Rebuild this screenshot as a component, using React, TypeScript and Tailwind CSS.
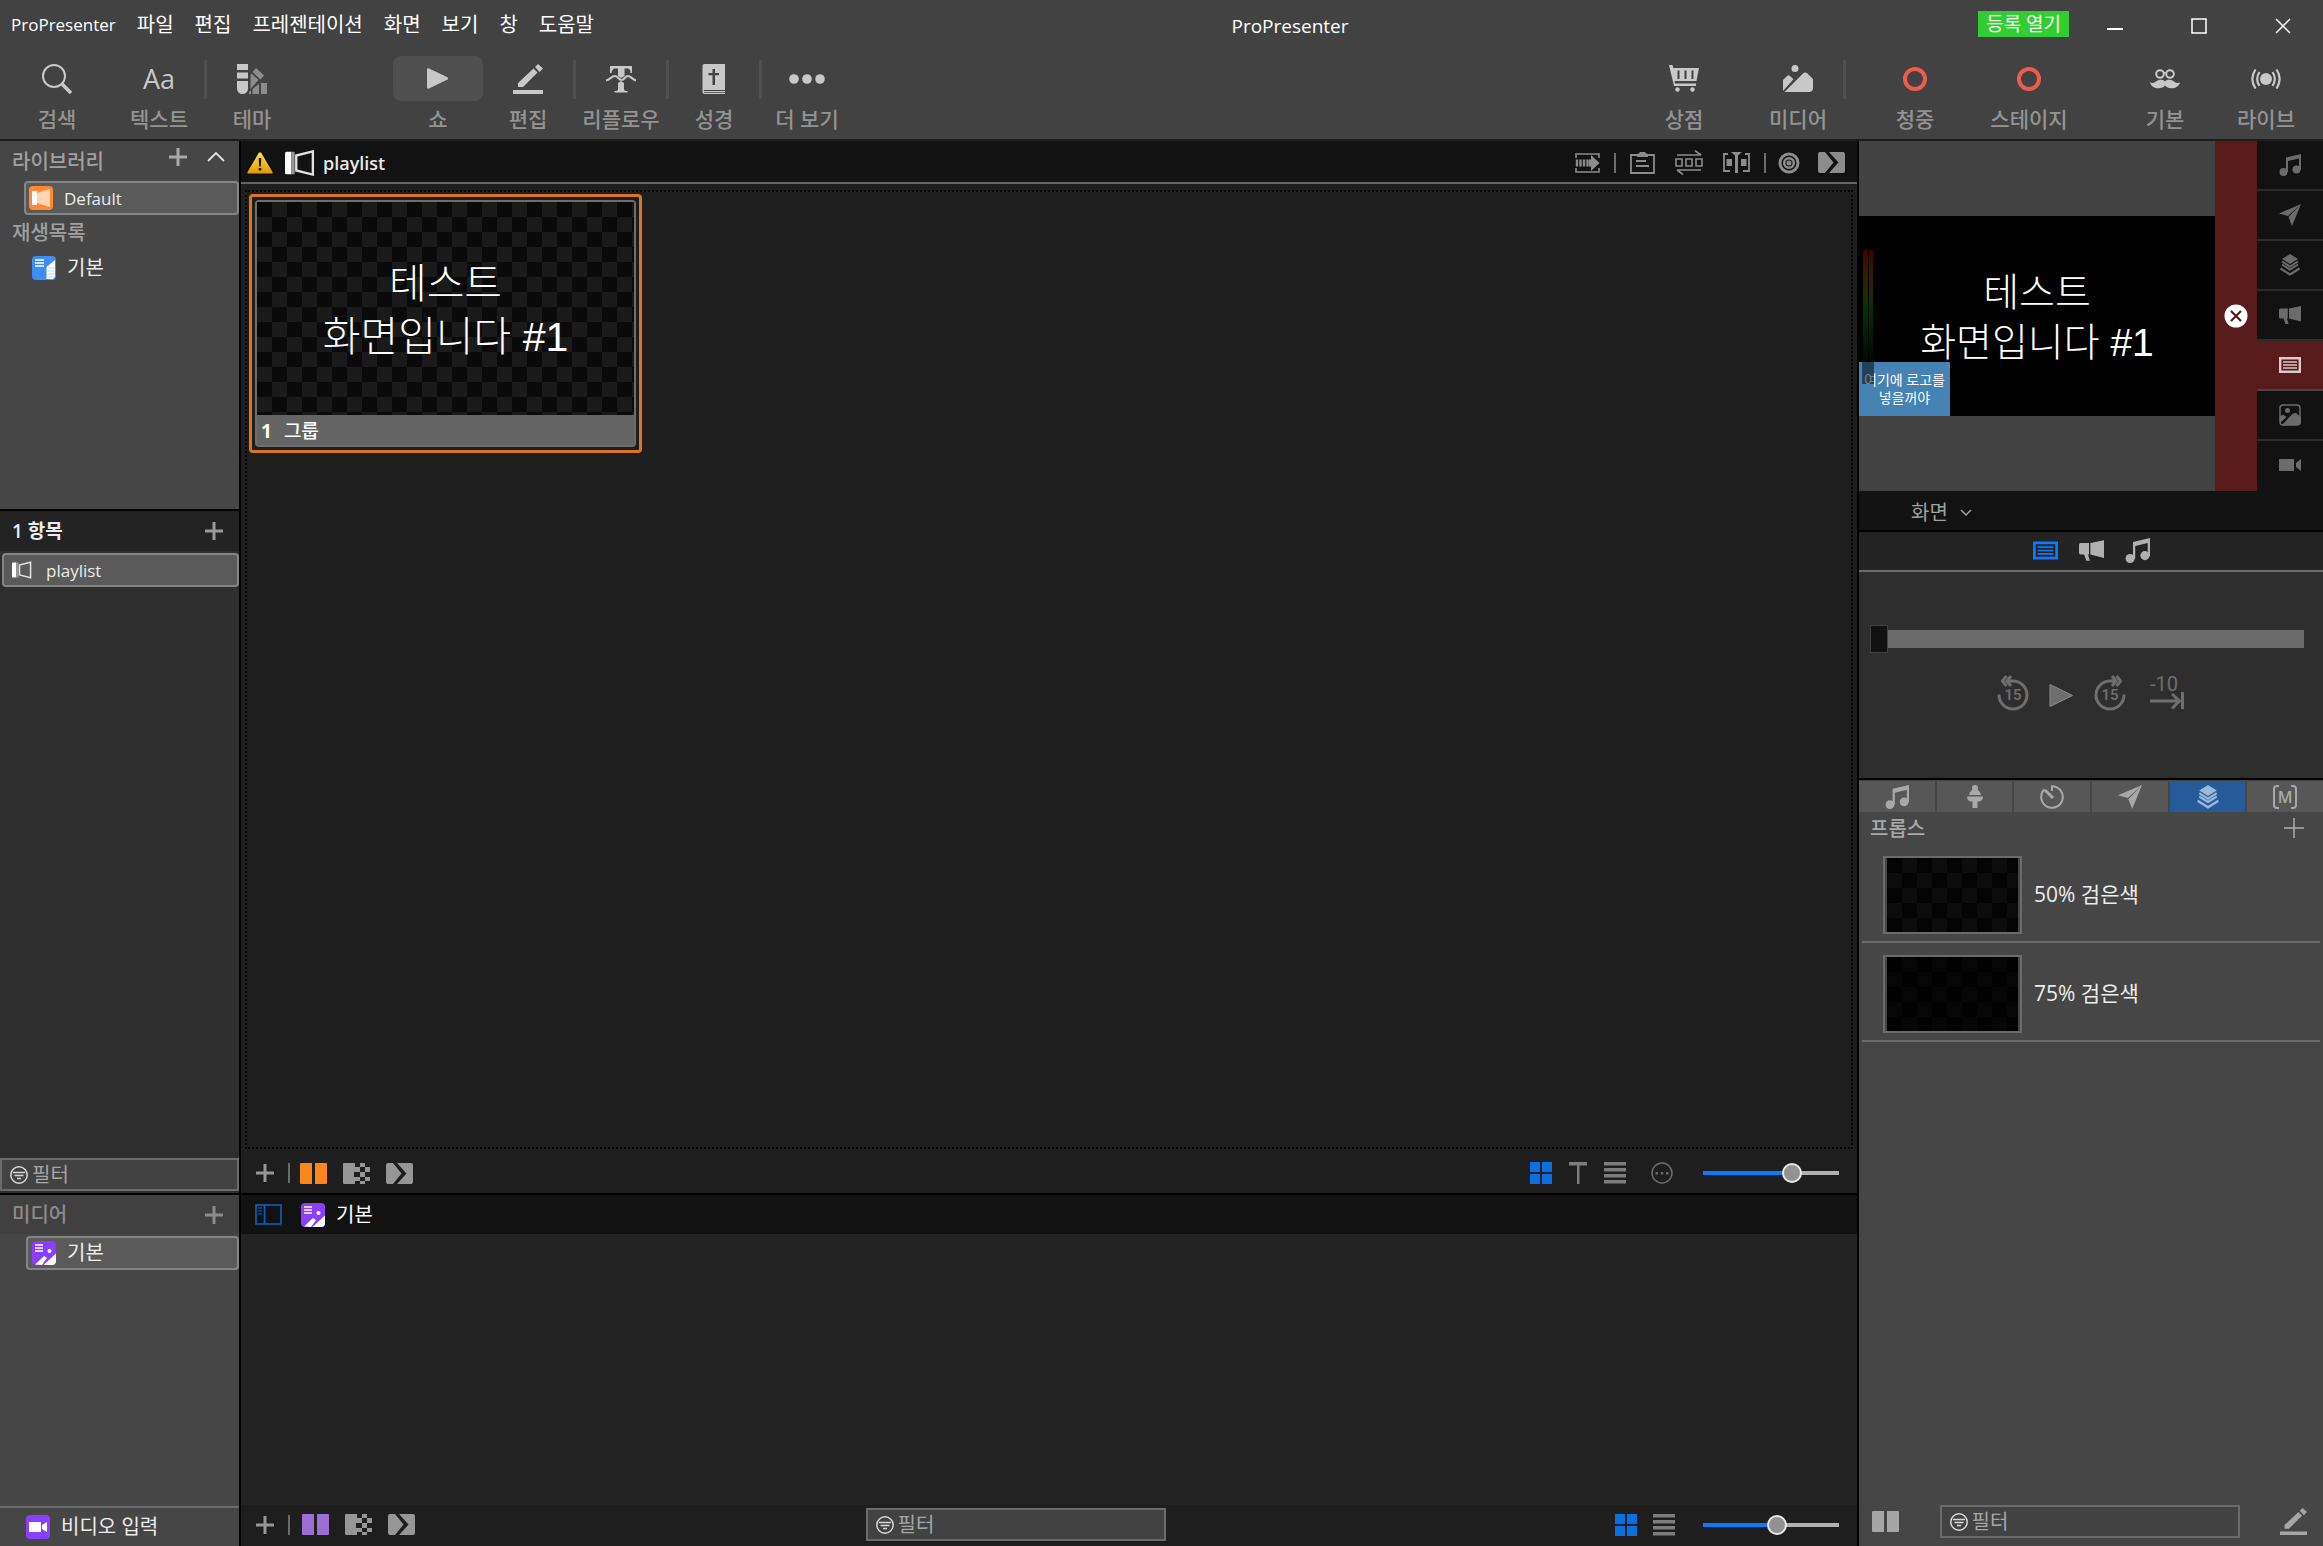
import { useState, type ReactNode } from "react";
import clsx from "clsx";

type IconProps = { className?: string };

const SearchIcon = () => (
  <svg width="30" height="30" viewBox="0 0 30 30" fill="none" stroke="currentColor">
    <circle cx="12" cy="12" r="11" strokeWidth="2" />
    <path d="M20 20l9 9" strokeWidth="3.500" />
  </svg>
);

const ThemeIcon = () => (
  <svg width="30" height="30" viewBox="0 0 30 30">
    <g fill="#c8c8c8">
      <path d="M0 0h11v6H0zM0 8.500h11v6H0zM0 17h11v7.500a5.500 5.500 0 0 1-11 0z" />
    </g>
    <g fill="#8c8c8c">
      <path d="M19 4l8 7.500-3.500 4L15.500 8zM14.500 9.500l7 6.500-8 9V11z" />
      <path d="M24 19h6v11h-6zM15.500 25l6.500-5v10h-6.500zM12 28l2-1.500V30h-2z" />
    </g>
  </svg>
);

const PlayIcon = () => (
  <svg width="22" height="21" viewBox="0 0 22 21" fill="currentColor">
    <path d="M0 1.500C0 .3 1 0 2 .4l18 8.600c1.500.8 1.500 2 0 2.800L2 20.600c-1 .4-2 0-2-1.200z" />
  </svg>
);

const EditIcon = () => (
  <svg width="30" height="30" viewBox="0 0 30 30" fill="currentColor">
    <path d="M0 26h30v4H0zM5 23v-4L20.500 4.500l4 4L10 23zM22 3l3-3 5 4.500-3.500 3.500z" />
  </svg>
);

const ReflowIcon = () => (
  <svg width="30" height="28" viewBox="0 0 30 28" fill="currentColor">
    <path d="M4 1h22v7h-1.500c0-3-1-4.500-3-4.500h-3V11L15 13l-3-2V3.500H9c-2 0-3 1.500-3.500 4.500H4zM12 18l3-2 3 2v6.500c0 1.500 1.500 1.500 3.500 1.500v1.500h-13V26c2 0 3.500 0 3.500-1.500z" />
    <path d="M0 15.500c4-1 5.500-4.500 9-4.500s3.500 4 6.500 4 3.500-4 6.500-4 4 3.500 8 4.500" fill="none" stroke="currentColor" strokeWidth="2.200" />
  </svg>
);

const BibleIcon = () => (
  <svg width="24" height="30" viewBox="0 0 24 30">
    <path d="M2 0h21v30H2a2 2 0 0 1-1.500-2V2A2 2 0 0 1 2 0z" fill="#c8c8c8" />
    <path d="M10.500 5h2.500v4h4v2.300h-4V21h-2.500v-9.700h-4V9h4zM2 26h21v1H2zM2 28h21v.8H2z" fill="#424242" />
  </svg>
);

const MoreIcon = () => (
  <svg width="36" height="10" viewBox="0 0 36 10" fill="currentColor">
    <circle cx="5" cy="5" r="4.800" />
    <circle cx="18" cy="5" r="4.800" />
    <circle cx="31" cy="5" r="4.800" />
  </svg>
);

const CartIcon = () => (
  <svg width="30" height="27" viewBox="0 0 30 27" fill="currentColor">
    <path fillRule="evenodd" d="M0 0h3.500l.8 3H30l-2.500 13H5.500L6 18.500h21v2.500H5zM8.500 5.500v8.500h2V5.500zm7 0v8.500h2V5.500zm7 0v8.500h2V5.500z" />
    <circle cx="8.500" cy="24.500" r="2.200" />
    <circle cx="23.500" cy="24.500" r="2.200" />
  </svg>
);

const MediaIcon = () => (
  <svg width="30" height="27" viewBox="0 0 30 27" fill="currentColor">
    <circle cx="12" cy="3.500" r="3.500" />
    <path d="M0 23V15l4-4c1-.9 2-.9 3 0l3.500 3.200L0 26zM1.500 27L20 8.500c1.500-1.500 3-1.500 4.500 0L30 14v9a4 4 0 0 1-4 4z" />
  </svg>
);

const RingIcon = () => (
  <svg width="24" height="24" viewBox="0 0 24 24" fill="none" stroke="#ee5d4b">
    <circle cx="12" cy="12" r="10" strokeWidth="4" />
  </svg>
);

const MustacheIcon = () => (
  <svg width="30" height="20" viewBox="0 0 30 20" fill="none" stroke="currentColor">
    <circle cx="10" cy="5" r="3.800" strokeWidth="2" />
    <circle cx="20" cy="5" r="3.800" strokeWidth="2" />
    <path d="M13.500 4q1.500-1 3 0" strokeWidth="1.600" />
    <path d="M15 12.500c1.500-2.500 6.500-2.500 9 0 1.500 1.500 4 2 6 .8-1 4-4.500 6-8.500 6-3 0-5-1-6.500-2.700-1.500 1.700-3.500 2.700-6.500 2.700-4 0-7.500-2-8.500-6 2 1.200 4.500.7 6-.8 2.500-2.500 7.500-2.500 9 0z" fill="currentColor" stroke="none" />
  </svg>
);

const LiveIcon = () => (
  <svg width="30" height="20" viewBox="0 0 30 20" fill="none" stroke="currentColor" strokeWidth="2.200">
    <circle cx="15" cy="10" r="6" fill="currentColor" stroke="none" />
    <path d="M4.500.5c-4 6-4 13 0 19M8.500 3c-3 4.500-3 9.500 0 14M25.500.5c4 6 4 13 0 19M21.500 3c3 4.500 3 9.500 0 14" />
  </svg>
);

const MusicIcon = ({ className = "size-[22px]" }: IconProps) => (
  <svg className={className} viewBox="0 0 22 22" fill="currentColor">
    <path d="M7 3.500L22 0v4L9 7v11H7z" />
    <path d="M20 2h2v14h-2z" />
    <circle cx="4.500" cy="18" r="4" />
    <circle cx="17.500" cy="15.500" r="4" />
  </svg>
);

const SendIcon = ({ className = "size-[22px]" }: IconProps) => (
  <svg className={className} viewBox="0 0 22 22" fill="currentColor">
    <path d="M22 0L0 9.500l9 2.500zM22 0L9.500 13l3.500 9z" />
  </svg>
);

const LayersIcon = ({ className = "size-[22px]" }: IconProps) => (
  <svg className={className} viewBox="0 0 22 22" fill="currentColor">
    <path d="M11 0l8 5-8 5-8-5z" />
    <path d="M3 7.500l8 5 8-5M3 10.500l8 5 8-5" fill="none" stroke="currentColor" strokeWidth="2" />
    <path d="M1.500 14.500L11 20.500l9.500-6" fill="none" stroke="currentColor" strokeWidth="2.200" />
  </svg>
);

const HornIcon = ({ className = "size-[22px]" }: IconProps) => (
  <svg className={className} viewBox="0 0 22 22" fill="currentColor">
    <path d="M10 4.500L22 2v15.500L10 14.500zM0 6q0-1.500 1.500-1.500H8.800v10H8l1.500 5.500H6.500L4.500 14.500h-3Q0 14.500 0 13z" />
  </svg>
);

const SlideIcon = ({ className = "size-[22px]" }: IconProps) => (
  <svg className={className} viewBox="0 0 22 22" fill="none" stroke="currentColor">
    <path d="M1.200 4.200h19.600v13.600H1.200z" strokeWidth="2.400" />
    <path d="M4 8h14M4 11h14M4 14h14" strokeWidth="1.500" />
  </svg>
);

const PictureIcon = ({ className = "size-[22px]" }: IconProps) => (
  <svg className={className} viewBox="0 0 22 22" fill="currentColor">
    <rect x="1" y="1" width="20" height="20" rx="3" fill="none" stroke="currentColor" strokeWidth="1.500" />
    <circle cx="8.500" cy="6.500" r="2.500" />
    <path d="M1 12.500l3-2 3.500 2.500L1 19zM3 21L14 9.500l3-.5 5 4.500V18a3 3 0 0 1-3 3z" />
  </svg>
);

const CameraIcon = ({ className = "size-[22px]" }: IconProps) => (
  <svg className={className} viewBox="0 0 22 22" fill="currentColor">
    <path d="M0 5h15v12H0zM17 9l5-4v12l-5-4z" />
  </svg>
);

const StageIcon = () => (
  <svg width="16" height="23" viewBox="0 0 16 23" fill="currentColor">
    <circle cx="8" cy="3" r="3" />
    <path d="M5 5h6q3 2 3 5H2q0-3 3-5zM1 11.500h14q1 0 1 1-1 4-4 4H4q-3 0-4-4 0-1 1-1zM5.500 16h5v7h-5z" />
  </svg>
);

const TimerIcon = () => (
  <svg width="24" height="24" viewBox="0 0 24 24" fill="none" stroke="currentColor" strokeWidth="2">
    <path d="M12 6V1.200A10.800 10.800 0 1 1 4.500 4.200" />
    <path d="M5 5l8 8" strokeWidth="3" />
  </svg>
);

const MacroIcon = () => (
  <span className="flex items-center">
    <svg width="6" height="24" viewBox="0 0 6 24" fill="none" stroke="currentColor" strokeWidth="2">
      <path d="M6 1H4Q1 1 1 4v16q0 3 3 3h2" />
    </svg>
    <span className="flex w-3 justify-center text-[16px] leading-6 font-semibold">M</span>
    <svg width="6" height="24" viewBox="0 0 6 24" fill="none" stroke="currentColor" strokeWidth="2">
      <path d="M0 1h2q3 0 3 3v16q0 3-3 3H0" />
    </svg>
  </span>
);

const PlusIcon = ({ className = "size-[18px]" }: IconProps) => (
  <svg className={className} viewBox="0 0 18 18" stroke="currentColor" strokeWidth="3">
    <path d="M9 0v18M0 9h18" />
  </svg>
);

const DocumentIcon = ({ className = "h-6 w-7" }: IconProps) => (
  <svg className={className} viewBox="0 0 28 24">
    <path d="M0 3q0-1.500 1.500-1.500H6v21H1.500Q0 22.500 0 21z" fill="#fff" />
    <path d="M6 1.500h3v21H6z" fill="#999" />
    <path d="M10.500 5L26 1.200v21.600L10.500 19z" fill="none" stroke="#e0e0e0" strokeWidth="2.200" />
  </svg>
);

const LibraryIcon = () => (
  <svg width="24" height="24" viewBox="0 0 24 24">
    <rect width="24" height="24" rx="4" fill="#ff8a35" />
    <path d="M3 5h5v14H3z" fill="#fff" />
    <path d="M8 7l13-4v18L8 17z" fill="#ffd6b5" />
  </svg>
);

const PlaylistIcon = () => (
  <svg width="24" height="24" viewBox="0 0 24 24">
    <rect width="24" height="24" rx="4" fill="#3d8ff5" />
    <path d="M3 4h9M3 7h9M3 10h9" stroke="#fff" strokeWidth="1.500" />
    <path d="M14.500 11L23 4v16q-1 4-5 3h-3.500z" fill="#fff" />
    <path d="M16 12h7M16 15h7M16 18h7M16 21h6" stroke="#bcd6f8" />
  </svg>
);

const MediaPlaylistIcon = () => (
  <svg width="24" height="24" viewBox="0 0 24 24">
    <rect width="24" height="24" rx="4" fill="#8a3ffc" />
    <path d="M3 4h8M3 7h8M3 10h8" stroke="#fff" strokeWidth="1.500" />
    <circle cx="17.500" cy="10" r="2" fill="#fff" />
    <path d="M3 23.500l9-8.500 3 2-5 7zM11.500 24L24 12.500V20q0 4-4 4z" fill="#fff" />
  </svg>
);

const VideoInputIcon = () => (
  <svg width="24" height="24" viewBox="0 0 24 24">
    <rect width="24" height="24" rx="4" fill="#8a3ffc" />
    <path d="M3 7h12v10H3zM16 10l5-3v10l-5-3z" fill="#fff" />
  </svg>
);

const WarningIcon = () => (
  <svg width="26" height="22" viewBox="0 0 26 22">
    <defs>
      <linearGradient id="warn" x1="0" x2="0" y1="0" y2="1">
        <stop offset="0" stopColor="#ffe04a" />
        <stop offset="1" stopColor="#e09a00" />
      </linearGradient>
    </defs>
    <path d="M11.500 1.200q1.500-2 3 0L25.500 20q.5 1.500-1 1.500h-23q-1.500 0-1-1.500z" fill="url(#warn)" />
    <path d="M11.700 6h2.600l-.5 8.500h-1.600zM11.700 16h2.600v2.600h-2.600z" fill="#1c1400" />
  </svg>
);

const ImportIcon = () => (
  <svg width="25" height="20" viewBox="0 0 25 20" fill="none" stroke="currentColor" strokeWidth="1.600">
    <path d="M1 5V1h23v4M1 15v4h23v-4" />
    <path d="M2 6.500v7M5.500 6.500v7M9 6.500v7M12.500 6.500v7" strokeWidth="2.400" />
    <path d="M14 6.500h2V2l8.500 8-8.500 8v-4.500h-2z" fill="currentColor" stroke="none" />
  </svg>
);

const ClipboardIcon = () => (
  <svg width="25" height="23" viewBox="0 0 25 23" fill="none" stroke="currentColor" strokeWidth="1.800">
    <path d="M1 4h23v18H1zM6 10h10M6 15h13" />
    <path d="M7 6V3q2 0 3-2h5q1 2 3 2v3z" fill="currentColor" stroke="none" />
  </svg>
);

const LoopIcon = () => (
  <svg width="28" height="25" viewBox="0 0 28 25" fill="none" stroke="currentColor" strokeWidth="1.600">
    <path d="M2 5h24M20 .5L26 5M26 20H2M8 24.500L2 20M1 9h6v7H1zM11 9h6v7h-6zM21 9h6v7h-6z" />
  </svg>
);

const SplitIcon = () => (
  <svg width="27" height="21" viewBox="0 0 27 21" fill="none" stroke="currentColor" strokeWidth="1.800">
    <path d="M5 2H1v17h6M22 2h4v17h-6" />
    <path d="M3.500 7H9v7H3.500zM18 7h5.500v7H18zM12 3.500L8 0h11l-4 3.500V21h-3z" fill="currentColor" stroke="none" />
  </svg>
);

const TargetIcon = () => (
  <svg width="22" height="22" viewBox="0 0 22 22" fill="none" stroke="currentColor" strokeWidth="3">
    <circle cx="11" cy="11" r="9" />
    <circle cx="11" cy="11" r="4.800" strokeWidth="2.500" />
    <circle cx="11" cy="11" r="1" fill="currentColor" />
  </svg>
);

const TransitionIcon = () => (
  <svg width="27" height="21" viewBox="0 0 27 21" fill="currentColor">
    <path d="M2 0h5l8.500 10.500L7 21H2q-2 0-2-2V2q0-2 2-2zM11 0h14q2 0 2 2v17q0 2-2 2H11l9.500-10.500z" />
  </svg>
);

const SplitViewIcon = () => (
  <svg width="27" height="21" viewBox="0 0 27 21" fill="currentColor">
    <path d="M1 0h11v21H1q-1 0-1-1V1q0-1 1-1zM15 0h11q1 0 1 1v19q0 1-1 1H15z" />
  </svg>
);

const CheckerIcon = () => (
  <svg width="27" height="21" viewBox="0 0 27 21" fill="currentColor">
    <path d="M1 0h11v4h5v5h-6v5h6v4h-5v3H1q-1 0-1-1V1q0-1 1-1zM17 0h5v4h-5zM22 4h5v5h-5zM17 9h5v5h-5zM22 14h5v4h-5zM17 18h5v3h-5z" />
  </svg>
);

const GridIcon = () => (
  <svg width="22" height="22" viewBox="0 0 22 22" fill="#0a6fe0">
    <path d="M0 0h10v10H0zM12 0h10v10H12zM0 12h10v10H0zM12 12h10v10H12z" />
  </svg>
);

const RowsIcon = () => (
  <svg width="22" height="22" viewBox="0 0 22 22" fill="currentColor">
    <path d="M0 0h22v3.500H0zM0 6h22v3.500H0zM0 12h22v3.500H0zM0 18h22v3.500H0z" />
  </svg>
);

const TextViewIcon = () => (
  <svg width="18" height="22" viewBox="0 0 18 22" fill="currentColor">
    <path d="M0 0h18v3.500H0zM8 3h2.500v19H8z" />
  </svg>
);

const DotsCircleIcon = () => (
  <svg width="22" height="22" viewBox="0 0 22 22" fill="currentColor">
    <circle cx="11" cy="11" r="10" fill="none" stroke="currentColor" strokeWidth="1.500" />
    <path d="M4.500 10h2.500v2.500H4.500zM9.800 10h2.500v2.500H9.800zM15 10h2.500v2.500H15z" />
  </svg>
);

const SidebarIcon = () => (
  <svg width="27" height="21" viewBox="0 0 27 21" fill="none" stroke="#0a63c8" strokeWidth="1.600">
    <path d="M1 1h25v19H1zM9.500 1v19" />
    <path d="M3 4h4M3 7h4M3 10h4" strokeWidth="1" />
  </svg>
);

const FilterIcon = () => (
  <svg className="size-[18px] shrink-0" viewBox="0 0 18 18" fill="none" stroke="#d8d8d8" strokeWidth="1.500">
    <circle cx="9" cy="9" r="8.200" />
    <path d="M3 6.500h12M4.500 9.500h9M7 12.500h4" />
  </svg>
);

const SkipIcon = ({ forward }: { forward?: boolean }) => (
  <svg width="32" height="36" viewBox="0 0 32 36" fill="none" stroke="currentColor" strokeWidth="3">
    {forward ? (
      <path d="M30 19.500A14 14 0 1 1 17 6h4M18 1l4 5-4 5M22.500 1l4 5-4 5" />
    ) : (
      <path d="M2 19.500A14 14 0 1 0 15 6h-4M14 1l-4 5 4 5M9.500 1l-4 5 4 5" />
    )}
    <text x="16" y="25" textAnchor="middle" fontSize="15" fontFamily="Roboto" fontWeight="600" fill="currentColor" stroke="none">
      15
    </text>
  </svg>
);

const SkipEndIcon = () => (
  <svg width="36" height="46" viewBox="0 -6 36 46" fill="none" stroke="currentColor" strokeWidth="3">
    <path d="M0 25h30M22 18l7.500 7-7.500 7.500M32.500 16v17" />
    <text x="0" y="15" fontSize="20" fontFamily="Roboto" fill="currentColor" stroke="none">
      -10
    </text>
  </svg>
);

const menus = ["파일", "편집", "프레젠테이션", "화면", "보기", "창", "도움말"];

const layers = [
  { label: "오디오", icon: <MusicIcon /> },
  { label: "메시지", icon: <SendIcon /> },
  { label: "프롭스", icon: <LayersIcon /> },
  { label: "공지", icon: <HornIcon /> },
  { label: "슬라이드", icon: <SlideIcon />, active: true },
  { label: "미디어", icon: <PictureIcon /> },
  { label: "비디오 입력", icon: <CameraIcon /> },
];

const propTabs = [
  { label: "오디오", icon: <MusicIcon className="size-6" /> },
  { label: "스테이지", icon: <StageIcon /> },
  { label: "타이머", icon: <TimerIcon /> },
  { label: "메시지", icon: <SendIcon className="size-6" /> },
  { label: "프롭스", icon: <LayersIcon className="size-6" />, active: true },
  { label: "매크로", icon: <MacroIcon /> },
];

const props = [
  {
    name: "50% 검은색",
    checker: "bg-[repeating-conic-gradient(#0c0c0c_0_25%,#040404_0_50%)]",
  },
  {
    name: "75% 검은색",
    checker: "bg-[repeating-conic-gradient(#060606_0_25%,#020202_0_50%)]",
  },
];

function ToolButton({ label, active, children }: { label: string; active?: boolean; children: ReactNode }) {
  return (
    <button className="flex w-[90px] flex-col items-center gap-0.5">
      <span
        className={clsx(
          "flex h-[45px] w-full items-center justify-center rounded-lg text-[#c8c8c8]",
          active && "bg-[#4f4f4f]"
        )}
      >
        {children}
      </span>
      <span className="text-[21px] leading-8 font-medium whitespace-nowrap text-[#939393]">{label}</span>
    </button>
  );
}

const ToolDivider = () => <div className="mt-1 h-[39px] w-[3px] bg-[#4f4f4f]" />;

const BarDivider = () => <div className="h-5 w-0.5 bg-[#6b6b6b]" />;

function IconButton({ label, className, children }: { label: string; className?: string; children: ReactNode }) {
  return (
    <button aria-label={label} className={clsx("flex items-center justify-center", className)}>
      {children}
    </button>
  );
}

function Filter({ className }: { className?: string }) {
  return (
    <label className={clsx("flex h-[33px] items-center gap-1 border-2 border-[#6b6b6b] bg-[#424242] px-2", className)}>
      <FilterIcon />
      <input
        type="text"
        aria-label="필터"
        placeholder="필터"
        className="w-full min-w-0 bg-transparent text-[20px] leading-7 text-white outline-none placeholder:text-[#a6a6a6]"
      />
    </label>
  );
}

function ZoomSlider({ initial }: { initial: number }) {
  const [value, setValue] = useState(initial);
  // thumb is 20px wide on a 136px track
  const stop = 10 + (value / 100) * 116;
  return (
    <input
      type="range"
      aria-label="크기"
      value={value}
      onChange={(e) => setValue(Number(e.target.value))}
      style={{ backgroundImage: `linear-gradient(to right, #0a7aff ${stop}px, #b0b0b0 ${stop}px)` }}
      className="h-5 w-[136px] appearance-none bg-transparent bg-[length:100%_4px] bg-center bg-no-repeat [&::-webkit-slider-thumb]:size-5 [&::-webkit-slider-thumb]:appearance-none [&::-webkit-slider-thumb]:rounded-full [&::-webkit-slider-thumb]:border-2 [&::-webkit-slider-thumb]:border-[#e8e8e8] [&::-webkit-slider-thumb]:bg-[#929292]"
    />
  );
}

function TitleBar() {
  return (
    <header className="flex h-12 items-center text-[20px] text-white">
      <nav className="flex flex-1 items-center gap-[21px] pt-0.5 pl-[11px]">
        <button className="text-[17px]">ProPresenter</button>
        {menus.map((menu) => (
          <button key={menu}>{menu}</button>
        ))}
      </nav>
      <h1 className="pt-1 pl-[278px] text-[19px]">ProPresenter</h1>
      <div className="flex flex-1 items-center justify-end gap-[38px] pr-8">
        <button className="h-[26px] bg-[#32cd32] px-2 text-[19px] leading-[26px]">등록 열기</button>
        <div className="flex items-center gap-[68px] pt-1">
          <IconButton label="최소화">
            <svg width="16" height="16" viewBox="0 0 16 16" stroke="#fff" strokeWidth="2">
              <path d="M0 11h16" />
            </svg>
          </IconButton>
          <IconButton label="최대화">
            <svg width="16" height="16" viewBox="0 0 16 16" fill="none" stroke="#fff" strokeWidth="1.500">
              <path d="M1 1h14v14H1z" />
            </svg>
          </IconButton>
          <IconButton label="닫기">
            <svg width="16" height="16" viewBox="0 0 16 16" stroke="#fff" strokeWidth="1.500">
              <path d="M1 1l14 14M15 1L1 15" />
            </svg>
          </IconButton>
        </div>
      </div>
    </header>
  );
}

function Toolbar() {
  return (
    <div className="flex h-[93px] items-start border-b-2 border-[#1c1c1c] px-3 pt-2">
      <ToolButton label="검색"><SearchIcon /></ToolButton>
      <div className="w-3" />
      <ToolButton label="텍스트"><span className="text-[27px] leading-8">Aa</span></ToolButton>
      <ToolDivider />
      <ToolButton label="테마"><ThemeIcon /></ToolButton>
      <div className="w-24" />
      <ToolButton label="쇼" active><PlayIcon /></ToolButton>
      <ToolButton label="편집"><EditIcon /></ToolButton>
      <ToolDivider />
      <ToolButton label="리플로우"><ReflowIcon /></ToolButton>
      <ToolDivider />
      <ToolButton label="성경"><BibleIcon /></ToolButton>
      <ToolDivider />
      <ToolButton label="더 보기"><MoreIcon /></ToolButton>
      <div className="flex-1" />
      <ToolButton label="상점"><CartIcon /></ToolButton>
      <div className="w-6" />
      <ToolButton label="미디어"><MediaIcon /></ToolButton>
      <ToolDivider />
      <div className="w-6" />
      <ToolButton label="청중"><RingIcon /></ToolButton>
      <div className="w-6" />
      <ToolButton label="스테이지"><RingIcon /></ToolButton>
      <div className="w-[46px]" />
      <ToolButton label="기본"><MustacheIcon /></ToolButton>
      <div className="w-[11px]" />
      <ToolButton label="라이브"><LiveIcon /></ToolButton>
    </div>
  );
}

const selectedRow = "flex h-[34px] items-center rounded-sm border-2 border-[#858585] bg-[#5a5a5a] text-[#ececec]";

function Sidebar() {
  return (
    <aside className="flex w-[241px] shrink-0 flex-col border-r-2 border-black text-[20px]">
      <section className="flex h-[370px] flex-col border-b-2 border-black bg-[#464646]">
        <div className="flex h-10 items-center justify-between pl-3">
          <h2 className="pt-0.5 font-medium text-[#a0a0a0]">라이브러리</h2>
          <div className="flex items-center gap-5 pr-3.5 pb-2 text-[#a8a8a8]">
            <IconButton label="라이브러리 추가"><PlusIcon /></IconButton>
            <IconButton label="접기">
              <svg width="18" height="10" viewBox="0 0 18 10" fill="none" stroke="#e0e0e0" strokeWidth="1.800">
                <path d="M1 9l8-8 8 8" />
              </svg>
            </IconButton>
          </div>
        </div>
        <button className={clsx(selectedRow, "ml-6 gap-[11px] pl-[3px]")}>
          <LibraryIcon />
          <span className="pt-0.5 text-[17px]">Default</span>
        </button>
        <h2 className="pl-3 leading-9 font-medium text-[#a0a0a0]">재생목록</h2>
        <button className="flex h-[34px] items-center gap-[11px] pl-8 text-[#ececec]">
          <PlaylistIcon />
          기본
        </button>
      </section>
      <section className="flex flex-1 flex-col border-b-2 border-black bg-[#2e2e2e]">
        <div className="flex h-10 items-center justify-between bg-[#232323] pr-4 pl-3">
          <h2 className="text-[19px] font-semibold text-[#ececec]">1 항목</h2>
          <IconButton label="항목 추가" className="text-[#9a9a9a]"><PlusIcon /></IconButton>
        </div>
        <button className={clsx(selectedRow, "mt-0.5 ml-0.5 gap-3.5 pl-2")}>
          <DocumentIcon className="h-[18px] w-5" />
          <span className="pt-0.5 text-[17px]">playlist</span>
        </button>
        <div className="flex-1" />
        <Filter className="mb-0.5" />
      </section>
      <section className="flex h-[351px] flex-col bg-[#464646]">
        <div className="mb-0.5 flex h-[39px] items-center justify-between bg-[#404040] pr-4 pl-3">
          <h2 className="font-medium text-[#8c8c8c]">미디어</h2>
          <IconButton label="미디어 추가" className="text-[#8c8c8c]"><PlusIcon /></IconButton>
        </div>
        <button className={clsx(selectedRow, "ml-[26px] gap-[11px] pl-1")}>
          <MediaPlaylistIcon />
          기본
        </button>
        <div className="flex-1" />
        <button className="flex h-10 items-center gap-[11px] border-t-2 border-[#6b6b6b] pl-[26px] text-[#ececec]">
          <VideoInputIcon />
          비디오 입력
        </button>
      </section>
    </aside>
  );
}

function SlideText({ className }: { className: string }) {
  return (
    <p className={clsx("pt-1 text-center font-['Liberation_Sans','Noto_Sans_CJK_KR',sans-serif] font-light text-white", className)}>
      테스트
      <br />
      화면입니다 #1
    </p>
  );
}

function Main() {
  return (
    <main className="flex min-w-0 flex-1 flex-col border-r-2 border-black bg-[#1e1e1e]">
      <div className="flex h-[43px] items-center border-b-2 border-[#646464] bg-[#121212] pt-0.5 pr-3 pl-1.5">
        <WarningIcon />
        <span className="w-3" />
        <DocumentIcon className="h-[26px] w-[30px]" />
        <h2 className="flex-1 pt-0.5 pl-2 text-[18px] font-semibold text-[#e8e8e8]">playlist</h2>
        <div className="flex items-center text-[#8c8c8c]">
          <IconButton label="가져오기" className="mr-3.5"><ImportIcon /></IconButton>
          <BarDivider />
          <IconButton label="클립보드" className="mr-5 ml-3.5"><ClipboardIcon /></IconButton>
          <IconButton label="반복" className="mr-5"><LoopIcon /></IconButton>
          <IconButton label="나누기" className="mr-3.5"><SplitIcon /></IconButton>
          <BarDivider />
          <IconButton label="대상" className="mr-[18px] ml-3"><TargetIcon /></IconButton>
          <IconButton label="전환"><TransitionIcon /></IconButton>
        </div>
      </div>

      <div className="mx-1 mt-1.5 flex flex-1 items-start border-2 border-dotted border-black p-0.5">
        <button className="rounded-sm border-3 border-[#dd751c] bg-[#1e1e1e] p-[3px]">
          <div className="rounded-sm border-2 border-[#6e6e6e]">
            <div className="flex h-[213px] w-[377px] items-center justify-center bg-[repeating-conic-gradient(#1a1a1a_0_25%,#0a0a0a_0_50%)] bg-[length:30px_30px]">
              <SlideText className="text-[41px] leading-[53px]" />
            </div>
            <div className="flex h-[30px] items-center gap-3 bg-[#646464] pt-0.5 pl-1 text-[19px] font-medium text-white">
              <b className="font-bold">1</b>
              그룹
            </div>
          </div>
        </button>
      </div>

      <div className="flex h-[46px] items-center border-b-2 border-black pt-1 pr-[18px] pl-[15px] text-[#969696]">
        <IconButton label="슬라이드 추가" className="mr-[14px]"><PlusIcon /></IconButton>
        <BarDivider />
        <div className="ml-2.5 flex flex-1 gap-4">
          <IconButton label="분할 보기" className="text-[#fb861e]"><SplitViewIcon /></IconButton>
          <IconButton label="배경"><CheckerIcon /></IconButton>
          <IconButton label="전환"><TransitionIcon /></IconButton>
        </div>
        <IconButton label="격자" className="mr-[17px]"><GridIcon /></IconButton>
        <IconButton label="텍스트 보기" className="mr-[17px] text-[#7d7d7d]"><TextViewIcon /></IconButton>
        <IconButton label="목록" className="mr-[25px] text-[#7d7d7d]"><RowsIcon /></IconButton>
        <IconButton label="옵션" className="mr-[30px] text-[#6b6b6b]"><DotsCircleIcon /></IconButton>
        <ZoomSlider initial={68} />
      </div>

      <section className="flex h-[351px] flex-col">
        <div className="flex h-[39px] items-center bg-[#121212] pl-[14px] text-[20px] text-white">
          <IconButton label="사이드바" className="mr-[19px]"><SidebarIcon /></IconButton>
          <MediaPlaylistIcon />
          <h2 className="pl-[11px]">기본</h2>
        </div>
        <div className="flex-1 bg-[#232323]" />
        <div className="flex h-[41px] items-center pr-[18px] pb-0.5 pl-[15px] text-[#969696]">
          <div className="flex flex-1 items-center">
            <IconButton label="미디어 추가" className="mr-[14px]"><PlusIcon /></IconButton>
            <BarDivider />
            <div className="ml-3 flex gap-4">
              <IconButton label="분할 보기" className="text-[#9c6fd4]"><SplitViewIcon /></IconButton>
              <IconButton label="배경"><CheckerIcon /></IconButton>
              <IconButton label="전환"><TransitionIcon /></IconButton>
            </div>
          </div>
          <Filter className="mr-16 w-[300px]" />
          <div className="flex flex-1 items-center justify-end">
            <IconButton label="격자" className="mr-4"><GridIcon /></IconButton>
            <IconButton label="목록" className="mr-7 text-[#7d7d7d]"><RowsIcon /></IconButton>
            <ZoomSlider initial={55} />
          </div>
        </div>
      </section>
    </main>
  );
}

function Preview() {
  return (
    <div className="flex">
      <div className="flex flex-1 flex-col justify-center bg-[#424242]">
        <div className="relative flex aspect-video items-center justify-center bg-black">
          <SlideText className="text-[39px] leading-[50px]" />
          <p className="absolute bottom-0 left-0 flex h-[54px] w-[91px] items-center justify-center bg-[#4682b4] text-center text-[14px] leading-[18px] whitespace-nowrap text-white">
            여기에 로고를
            <br />
            넣을꺼야
          </p>
          <div className="absolute top-[34px] left-[3px] flex h-[134px] w-3 gap-px bg-black/50 px-px">
            <span className="h-[112px] flex-1 bg-linear-to-b from-[#400000] via-[#083008] via-50% to-[#020a02]" />
            <span className="h-[112px] flex-1 bg-linear-to-b from-[#400000] via-[#083008] via-50% to-[#020a02]" />
          </div>
        </div>
      </div>
      <button aria-label="모두 지우기" className="flex w-[42px] items-center justify-center bg-[#571b1b]">
        <svg width="24" height="24" viewBox="0 0 24 24">
          <circle cx="12" cy="12" r="11.500" fill="#fff" />
          <path d="M7 7l10 10M17 7L7 17" stroke="#571b1b" strokeWidth="2.200" />
        </svg>
      </button>
      <div className="flex w-[66px] flex-col">
        {layers.map((layer) => (
          <button
            key={layer.label}
            aria-label={`${layer.label} 지우기`}
            className={clsx(
              "flex h-[50px] items-center justify-center border-b-2 last:border-[#121212]",
              layer.active ? "border-[#464646] bg-[#571b1b] text-[#dcc8c8]" : "border-[#2b2b2b] bg-[#121212] text-[#6b6b6b]"
            )}
          >
            {layer.icon}
          </button>
        ))}
      </div>
    </div>
  );
}

function Player() {
  return (
    <section className="h-[208px] border-b-2 border-black bg-[#2e2e2e] pt-[53px]">
      <div className="pr-[19px] pl-[11px]">
        <input
          type="range"
          aria-label="재생 위치"
          defaultValue={0}
          className="block h-7 w-full appearance-none bg-transparent bg-linear-to-r from-[#6b6b6b] to-[#6b6b6b] bg-[length:100%_18px] bg-center bg-no-repeat [&::-webkit-slider-thumb]:h-7 [&::-webkit-slider-thumb]:w-[18px] [&::-webkit-slider-thumb]:appearance-none [&::-webkit-slider-thumb]:border [&::-webkit-slider-thumb]:border-[#424242] [&::-webkit-slider-thumb]:bg-[#111111]"
        />
      </div>
      <div className="mt-[17px] flex items-center justify-center text-[#6e6e6e]">
        <IconButton label="15초 뒤로" className="mr-5"><SkipIcon /></IconButton>
        <IconButton label="재생" className="mt-1 mr-5">
          <svg width="25" height="25" viewBox="0 0 25 25">
            <path d="M1 1.500v22l22.500-11z" fill="#6e6e6e" stroke="#8c8c8c" />
          </svg>
        </IconButton>
        <IconButton label="15초 앞으로" className="mr-6"><SkipIcon forward /></IconButton>
        <IconButton label="끝으로"><SkipEndIcon /></IconButton>
      </div>
    </section>
  );
}

function RightPanel() {
  return (
    <aside className="flex w-[464px] shrink-0 flex-col bg-[#464646]">
      <Preview />
      <div className="h-[41px] border-b-2 border-black bg-[#121212] pl-[52px]">
        <button className="flex h-full items-center gap-3 pt-1 text-[20px] text-[#a0a0a0]">
          화면
          <svg width="12" height="8" viewBox="0 0 12 8" fill="none" stroke="currentColor" strokeWidth="1.500">
            <path d="M1 1l5 5 5-5" />
          </svg>
        </button>
      </div>
      <div className="flex h-10 items-center justify-center gap-[21px] border-b-2 border-[#6b6b6b] bg-[#232323] pb-0.5 text-[#b0b0b0]">
        <IconButton label="슬라이드" className="text-[#0a7aff]"><SlideIcon className="size-[25px]" /></IconButton>
        <IconButton label="공지"><HornIcon className="size-[25px]" /></IconButton>
        <IconButton label="오디오"><MusicIcon className="size-[25px]" /></IconButton>
      </div>
      <Player />
      <div role="tablist" className="flex h-8 gap-0.5 pt-px">
        {propTabs.map((tab) => (
          <button
            key={tab.label}
            role="tab"
            aria-label={tab.label}
            aria-selected={!!tab.active}
            className={clsx(
              "flex flex-1 items-center justify-center",
              tab.active ? "bg-[#245b98] text-[#9db9d8]" : "bg-[#575757] text-[#a8a8a8]"
            )}
          >
            {tab.icon}
          </button>
        ))}
      </div>
      <div className="flex h-8 items-center justify-between pr-[19px] pl-[11px]">
        <h2 className="pt-0.5 text-[20px] font-medium text-[#a8a8a8]">프롭스</h2>
        <IconButton label="프롭 추가" className="text-[#b0b0b0]">
          <svg width="20" height="20" viewBox="0 0 20 20" stroke="currentColor" strokeWidth="1.500">
            <path d="M10 0v20M0 10h20" />
          </svg>
        </IconButton>
      </div>
      <ul className="flex-1 px-[3px]">
        {props.map((prop) => (
          <li key={prop.name} className="flex h-[99px] items-center gap-3 border-b-2 border-[#6b6b6b] pt-1 pl-[21px]">
            <div className="h-[78px] w-[139px] border-2 border-[#6b6b6b] px-0.5">
              <div className={clsx("h-full bg-[length:30px_30px]", prop.checker)} />
            </div>
            <span className="text-[21px] text-[#ececec]">{prop.name}</span>
          </li>
        ))}
      </ul>
      <div className="flex items-center justify-between pr-4 pb-2 pl-[13px] text-[#a6a6a6]">
        <IconButton label="분할 보기"><SplitViewIcon /></IconButton>
        <Filter className="w-[300px]" />
        <IconButton label="편집">
          <svg width="27" height="27" viewBox="0 0 30 30" fill="currentColor">
            <path d="M0 26h30v4H0zM5 23v-4L20.500 4.500l4 4L10 23zM22 3l3-3 5 4.500-3.500 3.500z" />
          </svg>
        </IconButton>
      </div>
    </aside>
  );
}

export default function App() {
  return (
    <div className="flex min-h-screen flex-col bg-[#424242] font-['Open_Sans','Noto_Sans_CJK_KR',sans-serif]">
      <TitleBar />
      <Toolbar />
      <div className="flex flex-1">
        <Sidebar />
        <Main />
        <RightPanel />
      </div>
    </div>
  );
}
